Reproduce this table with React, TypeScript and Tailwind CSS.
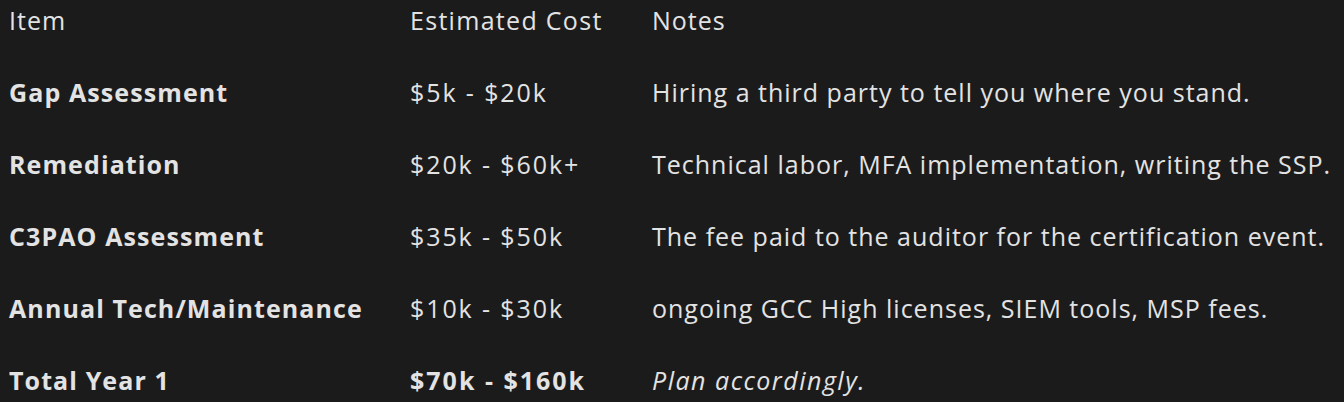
import React from 'react';

interface CostRow {
  item: string;
  cost: string;
  notes: string;
  total?: boolean;
}

const rows: CostRow[] = [
  { item: 'Gap Assessment', cost: '$5k - $20k', notes: 'Hiring a third party to tell you where you stand.' },
  { item: 'Remediation', cost: '$20k - $60k+', notes: 'Technical labor, MFA implementation, writing the SSP.' },
  { item: 'C3PAO Assessment', cost: '$35k - $50k', notes: 'The fee paid to the auditor for the certification event.' },
  { item: 'Annual Tech/Maintenance', cost: '$10k - $30k', notes: 'ongoing GCC High licenses, SIEM tools, MSP fees.' },
  { item: 'Total Year 1', cost: '$70k - $160k', notes: 'Plan accordingly.', total: true },
];

const App: React.FC = () => {
  return (
    <div
      className="min-h-screen bg-[#1b1b1b] text-[#e3e3e3] text-[25px] leading-[30px] tracking-[1px] pl-[9px]"
      style={{ fontFamily: '"Open Sans", Roboto, sans-serif' }}
    >
      {/* header */}
      <div className="grid grid-cols-[401px_242px_1fr] h-[56px] pt-[5px]">
        <div>Item</div>
        <div className="tracking-[1.3px]">Estimated Cost</div>
        <div>Notes</div>
      </div>

      {rows.map((row) => (
        <div key={row.item} className="grid grid-cols-[401px_242px_1fr] h-[72px] items-center">
          <div className="font-bold tracking-[1.1px]">{row.item}</div>
          <div className={row.total ? 'font-bold tracking-[2px]' : 'tracking-[1.9px]'}>{row.cost}</div>
          <div className={row.total ? 'italic tracking-[1.5px]' : ''}>{row.notes}</div>
        </div>
      ))}
    </div>
  );
};

export default App;
